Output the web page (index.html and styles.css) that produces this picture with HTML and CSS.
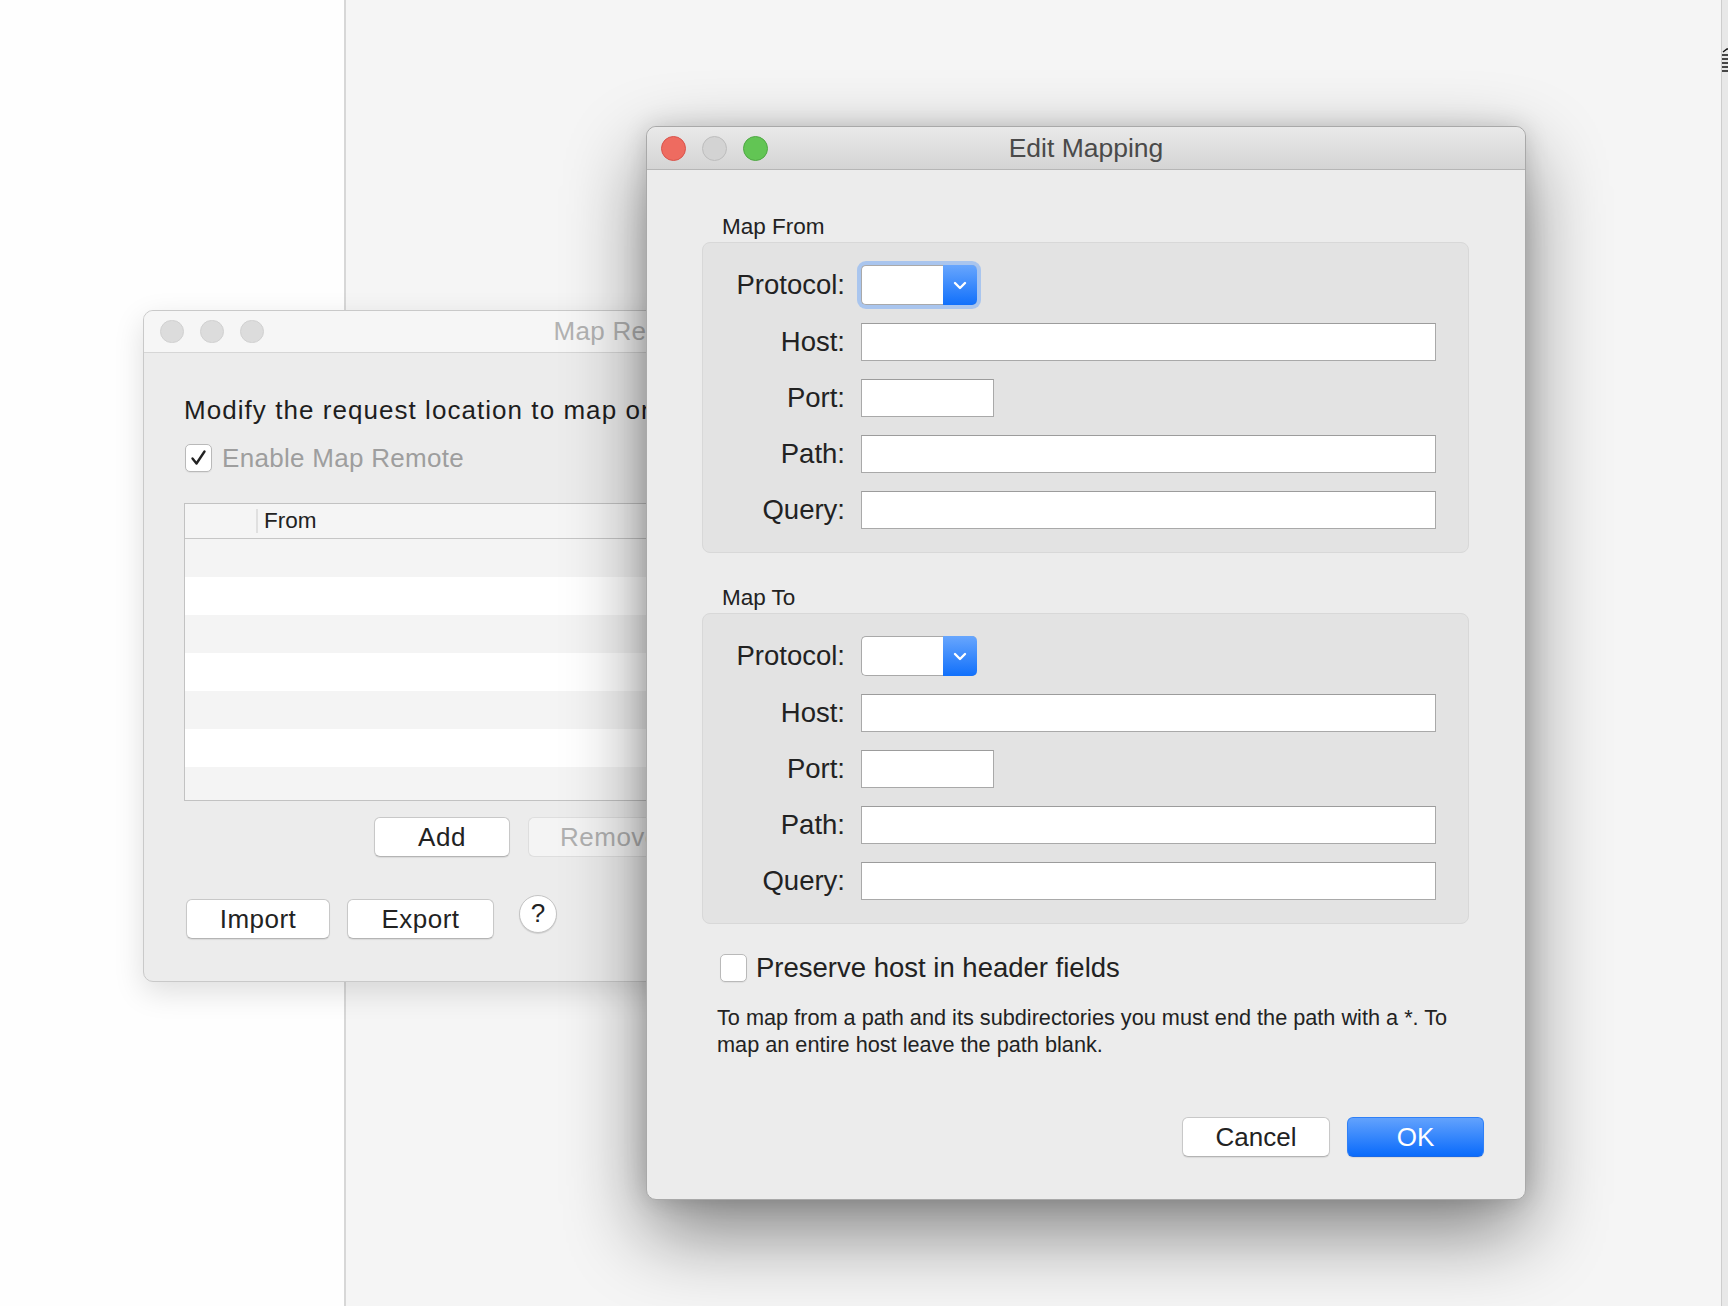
FILE: index.html
```html
<!DOCTYPE html>
<html>
<head>
<meta charset="utf-8">
<link rel="stylesheet" href="styles.css">
</head>
<body>
<div class="desktop">
  <div class="sidebar"></div>
  <div class="main"></div>
  <div class="edge">
    <svg class="edge-icon" width="7" height="26" viewBox="0 0 7 26"><path d="M1 4 L5 1 L7 1" stroke="#111" stroke-width="1.4" fill="none"/><path d="M0 7 H7 M0 11 H7 M0 15 H7 M0 19 H7 M0 23 H7" stroke="#111" stroke-width="1.6"/></svg>
  </div>

  <div class="win win-back">
    <div class="titlebar titlebar-back">
      <div class="lights">
        <span class="light gray"></span><span class="light gray"></span><span class="light gray"></span>
      </div>
      <div class="wtitle wtitle-back">Map Remote</div>
    </div>
    <div class="back-body">
      <div class="intro">Modify the request location to map on to another server.</div>
      <div class="enable-row">
        <span class="cb cb-checked"><svg width="27" height="28" viewBox="0 0 27 28"><path d="M7.5 14.5 L11.5 19.5 L19.5 7.5" stroke="#222" stroke-width="2.4" fill="none" stroke-linecap="round" stroke-linejoin="round"/></svg></span>
        <span class="enable-label">Enable Map Remote</span>
      </div>
      <div class="table">
        <div class="thead"><span class="col-sep"></span><span class="th">From</span></div>
        <div class="tbody">
          <div class="tr odd"></div><div class="tr"></div><div class="tr odd"></div><div class="tr"></div><div class="tr odd"></div><div class="tr"></div><div class="tr odd"></div>
        </div>
      </div>
      <div class="addrow">
        <button class="btn bbtn btn-add">Add</button>
        <button class="btn bbtn btn-remove">Remove</button>
      </div>
      <div class="iorow">
        <button class="btn bbtn btn-import">Import</button>
        <button class="btn bbtn btn-export">Export</button>
        <span class="help">?</span>
      </div>
    </div>
  </div>

  <div class="win win-front">
    <div class="titlebar titlebar-front">
      <div class="lights lights-front">
        <span class="light red"></span><span class="light dim"></span><span class="light green"></span>
      </div>
      <div class="wtitle">Edit Mapping</div>
      <div></div>
    </div>
    <div class="front-body">
      <div class="sec-label">Map From</div>
      <div class="group">
        <div class="flabel">Protocol:</div>
        <div class="combo focused"><span class="combo-val"></span><span class="combo-arrow"><svg width="14" height="9" viewBox="0 0 14 9"><path d="M2 2 L7 7 L12 2" stroke="#fff" stroke-width="2.4" fill="none" stroke-linecap="round" stroke-linejoin="round"/></svg></span></div>
        <div class="flabel">Host:</div>
        <div class="field"></div>
        <div class="flabel">Port:</div>
        <div class="field field-port"></div>
        <div class="flabel">Path:</div>
        <div class="field"></div>
        <div class="flabel">Query:</div>
        <div class="field"></div>
      </div>
      <div class="sec-label sec-label-2">Map To</div>
      <div class="group">
        <div class="flabel">Protocol:</div>
        <div class="combo"><span class="combo-val"></span><span class="combo-arrow"><svg width="14" height="9" viewBox="0 0 14 9"><path d="M2 2 L7 7 L12 2" stroke="#fff" stroke-width="2.4" fill="none" stroke-linecap="round" stroke-linejoin="round"/></svg></span></div>
        <div class="flabel">Host:</div>
        <div class="field"></div>
        <div class="flabel">Port:</div>
        <div class="field field-port"></div>
        <div class="flabel">Path:</div>
        <div class="field"></div>
        <div class="flabel">Query:</div>
        <div class="field"></div>
      </div>
      <div class="preserve-row">
        <span class="cb"></span>
        <span class="preserve-label">Preserve host in header fields</span>
      </div>
      <div class="help-text">To map from a path and its subdirectories you must end the path with a *. To map an entire host leave the path blank.</div>
      <div class="dlg-buttons">
        <button class="btn btn-cancel">Cancel</button>
        <button class="btn btn-ok">OK</button>
      </div>
    </div>
  </div>
</div>
</body>
</html>
```

FILE: styles.css
```css
* { box-sizing: border-box; }
html, body {
  margin: 0;
  padding: 0;
}
body {
  width: 1728px;
  height: 1306px;
  overflow: hidden;
  font-family: "Liberation Sans", Arial, sans-serif;
  color: #222;
  background: #f5f5f5;
}
.desktop {
  position: relative;
  width: 1728px;
  height: 1306px;
  display: flex;
}
.sidebar {
  width: 346px;
  background: #fefefe;
  border-right: 2px solid #d7d7d7;
}
.main {
  flex: 1;
  background: #f5f5f5;
}
.edge {
  width: 7px;
  background: #e8e8e8;
  border-left: 1px solid #cdcdcd;
  padding-top: 48px;
}
.edge-icon { display: block; }

/* windows */
.win {
  position: absolute;
  display: flex;
  flex-direction: column;
  border-radius: 10px;
  overflow: hidden;
}
.win-back {
  left: 143px;
  top: 310px;
  width: 970px;
  height: 672px;
  background: #ececec;
  border: 1px solid #c9c9c9;
  box-shadow: 0 10px 30px rgba(0,0,0,0.13);
}
.win-front {
  left: 646px;
  top: 126px;
  width: 880px;
  height: 1074px;
  background: #ececec;
  border: 1px solid #a9a9a9;
  box-shadow: 0 32px 80px rgba(0,0,0,0.48), 0 0 24px rgba(0,0,0,0.14);
  overflow: visible;
}
.titlebar {
  height: 43px;
  flex: none;
  display: grid;
  grid-template-columns: 121px 1fr 121px;
  align-items: center;
}
.titlebar-back {
  height: 42px;
  background: #f6f6f6;
  border-bottom: 1px solid #d6d6d6;
  display: flex;
}
.titlebar-front {
  background: linear-gradient(#e9e9e9, #d4d4d4);
  border-bottom: 1px solid #b6b6b6;
  border-radius: 10px 10px 0 0;
}
.lights {
  display: flex;
  gap: 16.5px;
  padding-left: 16px;
}
.lights-front {
  gap: 16px;
  padding-left: 14px;
}
.light {
  width: 24px;
  height: 24px;
  border-radius: 50%;
  display: block;
}
.light.gray { width: 23.5px; height: 23.5px; background: #dcdcdc; border: 1px solid #d0d0d0; }
.light.red { width: 25px; height: 25px; background: #ee6b60; border: 1px solid #d9534b; }
.light.dim { width: 25px; height: 25px; background: #d3d3d3; border: 1px solid #bdbdbd; }
.light.green { width: 25px; height: 25px; background: #62c554; border: 1px solid #4ea843; }
.wtitle {
  text-align: center;
  font-size: 26.5px;
  color: #4a4a4a;
  white-space: nowrap;
}
.wtitle-back {
  font-size: 26px;
  color: #b2b2b2;
  text-align: left;
  margin-left: 290px;
  width: 93px;
  overflow: hidden;
  letter-spacing: 0.3px;
}

/* back window body */
.back-body {
  padding: 41px 40px 0 40px;
  display: flex;
  flex-direction: column;
}
.intro {
  font-size: 26px;
  line-height: 32px;
  color: #1e1e1e;
  white-space: nowrap;
  letter-spacing: 1.05px;
  width: 464px;
  overflow: hidden;
}
.enable-row {
  margin-top: 18px;
  display: flex;
  align-items: center;
  gap: 10px;
  padding-left: 1px;
}
.cb {
  width: 27px;
  height: 28px;
  background: #fff;
  border: 1px solid #b9b9b9;
  border-radius: 5px;
  display: block;
  flex: none;
  box-shadow: 0 1px 1px rgba(0,0,0,0.06);
}
.cb svg { display: block; margin: -1px; }
.enable-label {
  font-size: 26px;
  line-height: 28px;
  color: #9e9e9e;
  letter-spacing: 0.3px;
}
.table {
  margin-top: 31px;
  height: 298px;
  width: 464px;
  border: 1px solid #c2c2c2;
  border-right: none;
  background: #f5f5f5;
  overflow: hidden;
}
.thead {
  height: 35px;
  border-bottom: 1px solid #c6c6c6;
  background: #f5f5f5;
  display: flex;
  align-items: center;
  padding-left: 71px;
}
.col-sep {
  width: 2px;
  height: 24px;
  background: #e0e0e0;
  margin-right: 6px;
}
.th {
  font-size: 22.5px;
  color: #222;
}
.tr { height: 38px; background: #fff; }
.tr.odd { background: #f4f4f4; }

.btn {
  font-family: "Liberation Sans", Arial, sans-serif;
  font-size: 26px;
  color: #222;
  background: #fff;
  border: 1px solid #c8c8c8;
  border-bottom-color: #b4b4b4;
  border-radius: 6px;
  height: 40px;
  padding: 0;
  box-shadow: 0 1px 1px rgba(0,0,0,0.08);
  white-space: nowrap;
  overflow: hidden;
}
.bbtn { letter-spacing: 0.5px; }
.addrow {
  margin-top: 16px;
  display: flex;
  gap: 18px;
  padding-left: 190px;
}
.btn-add { width: 136px; }
.btn-remove {
  width: 120px;
  background: #f4f4f4;
  color: #b0b0b0;
  border-color: #dedede;
  border-right: none;
  border-radius: 6px 0 0 6px;
  box-shadow: none;
  text-align: left;
  padding-left: 31px;
}
.iorow {
  margin-top: 42px;
  display: flex;
  align-items: flex-start;
  padding-left: 2px;
}
.btn-import { width: 144px; }
.btn-export { width: 147px; margin-left: 17px; }
.help {
  margin-left: 25px;
  margin-top: -4px;
  width: 38px;
  height: 38px;
  border-radius: 50%;
  background: #fff;
  border: 1px solid #c4c4c4;
  box-shadow: 0 1px 1px rgba(0,0,0,0.12);
  font-size: 26px;
  line-height: 34px;
  text-align: center;
  color: #222;
}

/* front window body */
.front-body {
  flex: 1;
  padding: 44px 56px 42px 55px;
  display: flex;
  flex-direction: column;
}
.sec-label {
  font-size: 22.5px;
  line-height: 26px;
  padding-left: 20px;
  margin-bottom: 2px;
  color: #222;
}
.sec-label-2 { margin-top: 32px; }
.group {
  background: #e3e3e3;
  border: 1px solid #d8d8d8;
  border-radius: 8px;
  padding: 22px 32px 23px 0;
  display: grid;
  grid-template-columns: 142px 1fr;
  grid-template-rows: 40px repeat(4, 38px);
  column-gap: 16px;
  row-gap: 18px;
  align-items: center;
}
.flabel {
  font-size: 27.5px;
  text-align: right;
  color: #222;
  white-space: nowrap;
}
.field {
  height: 38px;
  background: #fff;
  border: 1px solid #a9a9a9;
  border-top-color: #9c9c9c;
}
.field-port { width: 133px; }
.combo {
  width: 116px;
  height: 40px;
  display: flex;
  border-radius: 5px;
  background: #fff;
  border: 1px solid #a9a9a9;
  border-right: none;
}
.combo.focused {
  box-shadow: 0 0 0 4px #a9c5ee;
}
.combo-val { flex: 1; }
.combo-arrow {
  width: 34px;
  margin: -1px 0 -1px 0;
  border-radius: 0 5px 5px 0;
  background: linear-gradient(#68a6fd, #1170fb);
  display: flex;
  align-items: center;
  justify-content: center;
}
.combo-arrow svg { display: block; }
.preserve-row {
  margin-top: 30px;
  display: flex;
  align-items: center;
  gap: 9px;
  padding-left: 18px;
}
.preserve-label {
  font-size: 27.5px;
  line-height: 28px;
  color: #222;
}
.help-text {
  margin-top: 23px;
  padding-left: 15px;
  width: 772px;
  font-size: 21.7px;
  line-height: 26.5px;
  color: #222;
}
.dlg-buttons {
  margin-top: auto;
  margin-right: -15px;
  display: flex;
  justify-content: flex-end;
  gap: 17px;
}
.btn-cancel { width: 148px; }
.btn-ok {
  width: 137px;
  color: #fff;
  background: linear-gradient(#62a2fd, #0a6bfb);
  border: 1px solid #2f80f7;
  border-bottom-color: #1a68e6;
}
```
